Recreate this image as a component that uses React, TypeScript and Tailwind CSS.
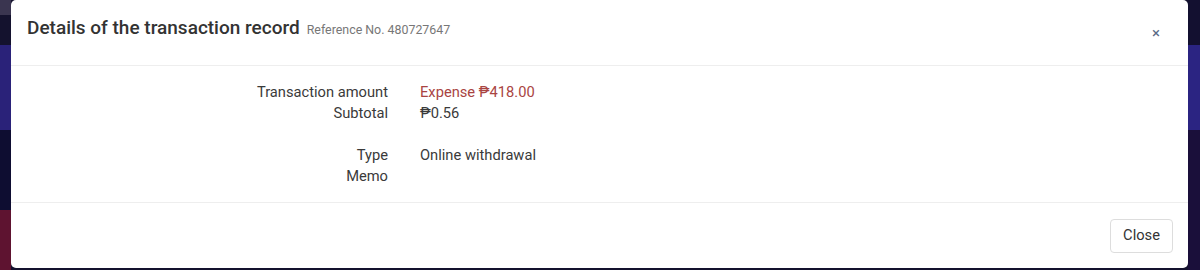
import * as React from "react";

// Transaction detail modal over a dark page backdrop.
const ROWS: { label: string; value: string; tone?: "expense" }[] = [
  { label: "Transaction amount", value: "Expense ₱418.00", tone: "expense" },
  { label: "Subtotal", value: "₱0.56" },
  { label: "", value: "" },
  { label: "Type", value: "Online withdrawal" },
  { label: "Memo", value: "" },
];

function LeftStrip() {
  return (
    <div className="flex w-[11px] shrink-0 flex-col">
      <div className="h-[15px] bg-[#3a3550]" />
      <div className="h-[30px] bg-[#14122e]" />
      <div className="h-[85px] bg-[#2a2279]" />
      <div className="h-[80px] bg-[#0e0d31]" />
      <div className="flex-1 bg-[#5e1330]" />
    </div>
  );
}

function RightStrip() {
  return (
    <div className="flex w-[12px] shrink-0 flex-col">
      <div className="h-[45px] bg-[#131030]" />
      <div className="h-[85px] bg-[#2b2482]" />
      <div className="flex-1 bg-[#1a0f3a]" />
    </div>
  );
}

export default function App() {
  return (
    <div
      className="flex h-[270px] w-[1200px] overflow-hidden bg-[#14122e]"
      style={{ fontFamily: "Roboto, 'Liberation Sans', sans-serif" }}
    >
      <LeftStrip />
      <div className="flex h-[268px] flex-1 flex-col rounded-[5px] bg-white">
        <div className="flex h-[66px] items-center justify-between border-b border-[#eeeeee] pl-[16px] pr-[28px] pb-[9px]">
          <div className="flex items-baseline gap-[7px]">
            <h4 className="text-[19px] font-medium text-[#333333]">
              Details of the transaction record
            </h4>
            <span className="text-[12.4px] text-[#777777]">Reference No. 480727647</span>
          </div>
          <button className="mt-[10px] text-[15px] leading-none text-[#5a6a85]">×</button>
        </div>

        <div className="grid grid-cols-[362px_1fr] gap-x-[32px] px-[15px] pt-[16px] pb-[15px] text-[14.7px] leading-[21px]">
          {ROWS.map((row, i) => (
            <React.Fragment key={i}>
              <div className="h-[21px] text-right text-[#3a3a3a]">{row.label}</div>
              <div
                className={
                  row.tone === "expense" ? "h-[21px] text-[#a94442]" : "h-[21px] text-[#3a3a3a]"
                }
              >
                {row.value}
              </div>
            </React.Fragment>
          ))}
        </div>

        <div className="flex flex-1 items-center justify-end border-t border-[#eeeeee] px-[15px]">
          <button className="h-[34px] rounded-[4px] border border-[#dddddd] bg-white px-[12px] text-[14.7px] text-[#333333]">
            Close
          </button>
        </div>
      </div>
      <RightStrip />
    </div>
  );
}
